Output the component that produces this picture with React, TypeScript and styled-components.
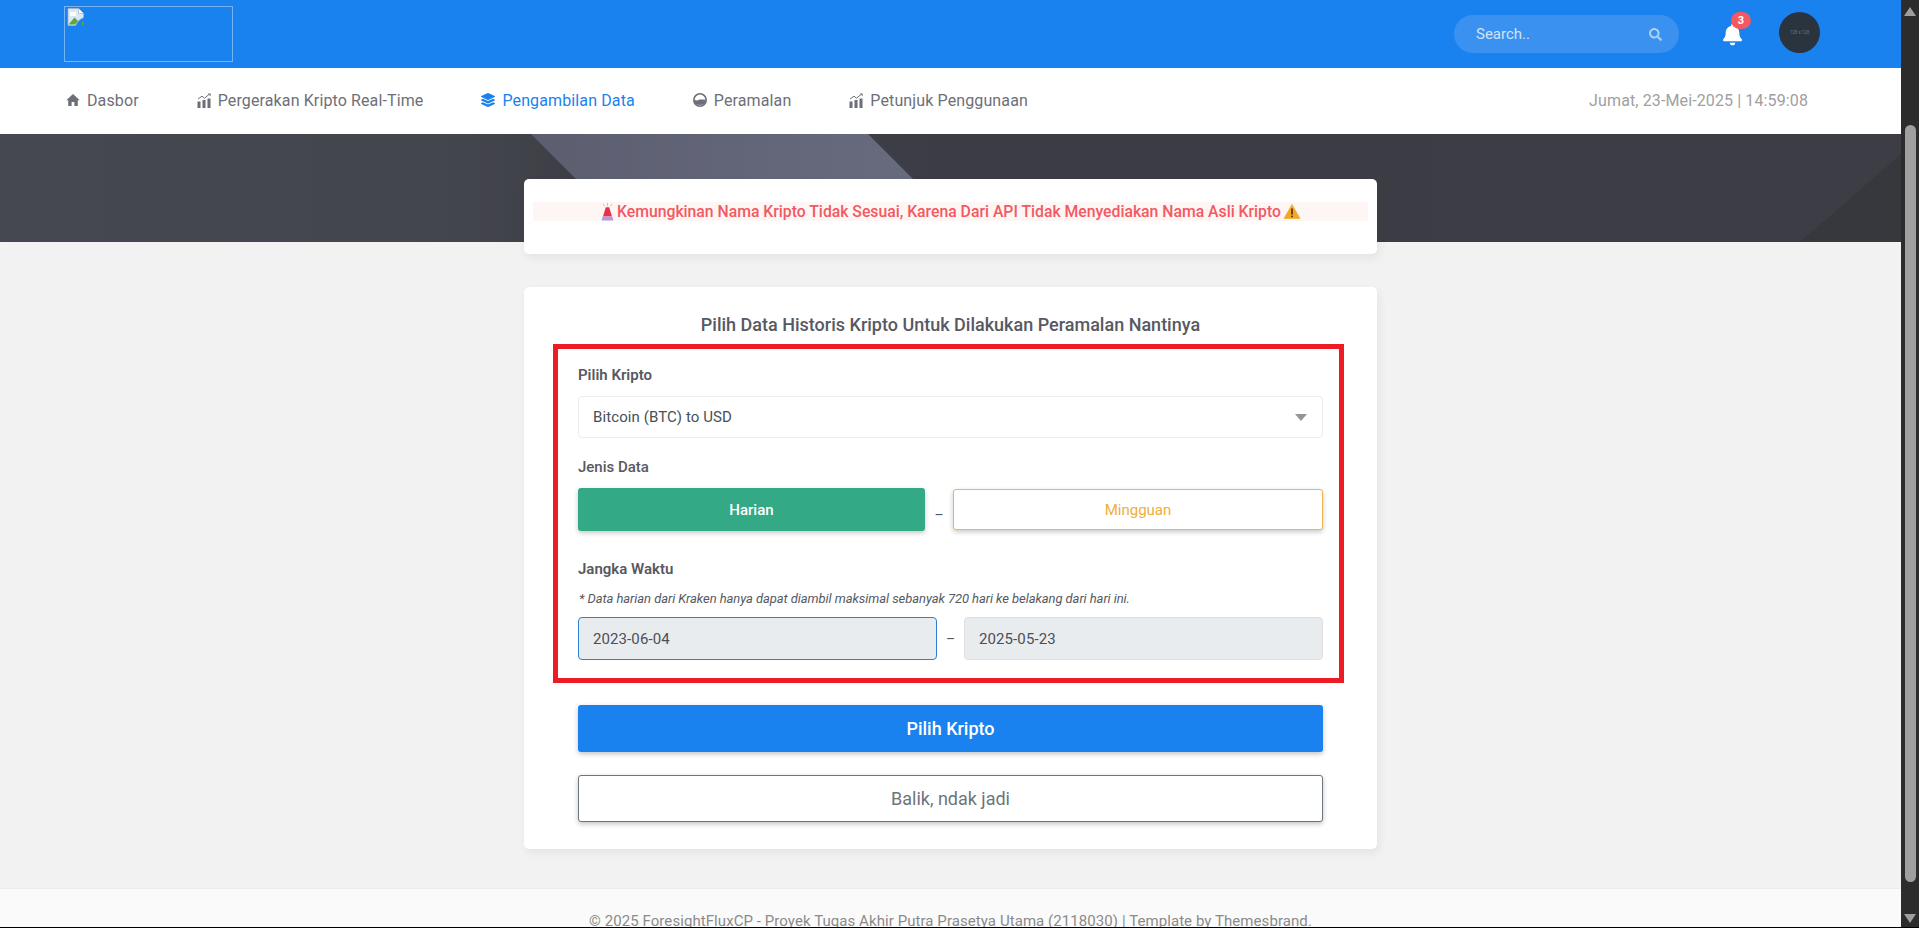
import React from "react";
import styled, { createGlobalStyle } from "styled-components";
import { FaBell, FaSearch, FaLayerGroup } from "react-icons/fa";

const Global = createGlobalStyle`
  html, body { margin: 0; padding: 0; height: 100%; overflow: hidden; background: #f2f2f2; }
  * { box-sizing: border-box; }
  body { font-family: Roboto, "Liberation Sans", sans-serif; color: #575962; }
`;

const Frame = styled.div`
  display: flex;
  width: 1919px;
  height: 928px;
  border-bottom: 1px solid #000;
  overflow: hidden;
`;
const Page = styled.div`
  flex: 1;
  min-width: 0;
  height: 927px;
  overflow: hidden;
  background: #f2f2f2;
`;
const TopBar = styled.header`
  height: 68px;
  background: #1a82ee;
  display: flex;
  align-items: center;
  padding: 0 81px 0 64px;
`;
const LogoBox = styled.div`
  width: 169px;
  height: 56px;
  border: 1px solid rgba(255, 255, 255, 0.4);
  padding: 1px 0 0 2px;
  line-height: 0;
`;
const Search = styled.div`
  margin-left: auto;
  width: 225px;
  height: 38px;
  border-radius: 19px;
  background: #3a91ef;
  display: flex;
  align-items: center;
  justify-content: space-between;
  padding: 0 17px 0 22px;
  color: #cfe4fb;
  font-size: 15px;
  svg { color: #a9d0f8; font-size: 13px; }
`;
const BellWrap = styled.div`
  position: relative;
  margin-left: 44px;
  width: 19px;
  height: 22px;
  color: #fff;
  margin-top: -1px;
  svg { display: block; width: 19px; height: 23px; }
`;
const Badge = styled.span`
  position: absolute;
  top: -11px;
  left: 8px;
  width: 20px;
  height: 17px;
  border-radius: 9px;
  background: #f25961;
  color: #fff;
  font-size: 11px;
  font-weight: 700;
  line-height: 17px;
  text-align: center;
`;
const Avatar = styled.div`
  margin-left: 37px;
  width: 41px;
  height: 41px;
  border-radius: 50%;
  background: #2a333e;
  color: #6f7680;
  font-size: 4.5px;
  display: flex;
  align-items: center;
  justify-content: center;
  margin-top: -3px;
`;
const NavBar = styled.nav`
  height: 66px;
  background: #fff;
  display: flex;
  align-items: center;
  padding: 0 93px 2px 66px;
  gap: 58px;
  font-size: 16px;
  letter-spacing: 0.12px;
`;
const NavItem = styled.div<{ $active?: boolean }>`
  display: flex;
  align-items: center;
  gap: 7px;
  color: ${(p) => (p.$active ? "#1a82ee" : "#6d6f78")};
  svg { flex: none; display: block; }
`;
const DateText = styled.div`
  margin-left: auto;
  color: #a0a0a0;
`;
const Hero = styled.section`
  position: relative;
  height: 108px;
  background: #42444c;
  overflow: hidden;
  svg { display: block; width: 100%; height: 100%; }
`;
const Content = styled.main`
  position: relative;
  z-index: 1;
  margin-top: -63px;
  display: flex;
  flex-direction: column;
  align-items: center;
  gap: 33px;
`;
const Card = styled.div`
  width: 853px;
  background: #fff;
  border-radius: 5px;
  box-shadow: 2px 4px 8px rgba(69, 65, 78, 0.08);
`;
const NoticeCard = styled(Card)`
  height: 75px;
  padding: 23px 9px 0;
`;
const Notice = styled.div`
  height: 19px;
  background: #fef5f5;
  color: #f25961;
  font-size: 15.75px;
  font-weight: 500;
  line-height: 19px;
  display: flex;
  align-items: center;
  justify-content: center;
  gap: 2px;
  svg { flex: none; }
`;
const FormCard = styled(Card)`
  padding: 26px 33px 27px 29px;
`;
const Title = styled.h2`
  margin: 0 0 7px;
  font-size: 18px;
  font-weight: 500;
  line-height: 24px;
  text-align: center;
  color: #575962;
  padding-left: 4px;
`;
const Marked = styled.div`
  border: 5px solid #ed1c24;
  padding: 16px 16px 18px 20px;
`;
const Label = styled.div<{ $gap: number; $weight?: number; $after?: number }>`
  margin-top: ${(p) => p.$gap}px;
  margin-bottom: ${(p) => p.$after ?? 11}px;
  font-size: 15px;
  line-height: 20px;
  font-weight: ${(p) => p.$weight ?? 600};
  color: #575962;
`;
const SelectBox = styled.div`
  height: 42px;
  border: 1px solid #ebedf2;
  border-radius: 4px;
  background: #fff;
  display: flex;
  align-items: center;
  justify-content: space-between;
  padding: 0 15px 0 14px;
  font-size: 15px;
  letter-spacing: 0.1px;
  color: #495057;
`;
const Caret = styled.span`
  width: 0;
  height: 0;
  border-left: 6px solid transparent;
  border-right: 6px solid transparent;
  border-top: 7px solid #959595;
`;
const ToggleRow = styled.div`
  display: grid;
  grid-template-columns: 347px 28px 370px;
  align-items: center;
`;
const Toggle = styled.div<{ $on?: boolean }>`
  height: ${(p) => (p.$on ? 43 : 41)}px;
  border-radius: 3px;
  display: flex;
  align-items: center;
  justify-content: center;
  font-size: 15px;
  font-weight: ${(p) => (p.$on ? 500 : 400)};
  background: ${(p) => (p.$on ? "#33aa85" : "#fff")};
  color: ${(p) => (p.$on ? "#fff" : "#f0ae3c")};
  border: ${(p) => (p.$on ? "none" : "1px solid #f0b54e")};
  box-shadow: 0 2px 5px rgba(0, 0, 0, 0.22);
`;
const Dash = styled.span<{ $drop?: number }>`
  text-align: center;
  font-size: 14px;
  color: #575962;
  position: relative;
  top: ${(p) => p.$drop ?? 0}px;
`;
const Note = styled.div`
  font-size: 13px;
  letter-spacing: -0.07px;
  line-height: 16px;
  font-style: italic;
  color: #575962;
  margin-bottom: 10px;
  padding-left: 1px;
`;
const DateRow = styled.div`
  display: grid;
  grid-template-columns: 359px 27px 359px;
  align-items: center;
`;
const DateInput = styled.div<{ $focus?: boolean }>`
  height: 43px;
  border-radius: 4px;
  background: #e9ecef;
  border: 1px solid ${(p) => (p.$focus ? "#2f7fd8" : "#dcdfe3")};
  display: flex;
  align-items: center;
  padding: 0 14px;
  font-size: 15px;
  letter-spacing: 0.1px;
  color: #495057;
`;
const BigButton = styled.div<{ $primary?: boolean }>`
  height: 47px;
  margin-top: ${(p) => (p.$primary ? 22 : 23)}px;
  margin-left: 25px;
  margin-right: 21px;
  border-radius: 3px;
  display: flex;
  align-items: center;
  justify-content: center;
  font-size: 18px;
  font-weight: ${(p) => (p.$primary ? 500 : 400)};
  background: ${(p) => (p.$primary ? "#1a82ee" : "#fff")};
  color: ${(p) => (p.$primary ? "#fff" : "#6c757d")};
  border: ${(p) => (p.$primary ? "none" : "1px solid #6c757d")};
  box-shadow: 0 2px 5px rgba(0, 0, 0, 0.24);
`;
const Footer = styled.footer`
  margin-top: 39px;
  height: 80px;
  background: #fafafa;
  border-top: 1px solid #ececec;
  padding-top: 22px;
  text-align: center;
  font-size: 15px;
  letter-spacing: 0.07px;
  line-height: 21px;
  color: #8b8b8b;
`;
const ScrollTrack = styled.div`
  width: 18px;
  flex: none;
  height: 927px;
  background: #2c2c2c;
  display: flex;
  flex-direction: column;
  align-items: center;
  padding: 7px 0 4px;
`;
const Arrow = styled.span<{ $down?: boolean }>`
  width: 0;
  height: 0;
  border-left: 6px solid transparent;
  border-right: 6px solid transparent;
  ${(p) => (p.$down ? "border-top: 9px solid #9e9e9e;" : "border-bottom: 9px solid #9e9e9e;")}
`;
const Thumb = styled.div`
  width: 11px;
  height: 757px;
  margin: 109px 0 auto;
  border-radius: 6px;
  background: #9f9f9f;
`;

const BrokenImage = () => (
  <svg width="18" height="18" viewBox="0 0 18 18">
    <path d="M1 0.5h10.5l5 5v4l-3.5 2-2.5 2.5-2 3.5H1z" fill="#d9e6f7" stroke="#a8b4c2" strokeWidth="0.7" />
    <path d="M11.5 0.5v5h5" fill="#fff" stroke="#a8b4c2" strokeWidth="0.7" />
    <path d="M3 4h6v4H3z" fill="#fff" />
    <path d="M1.5 16.5l6-7 3.5 3.5-3 3.5z" fill="#5fa83e" />
    <path d="M15 13l2 2.5-2 2.5z" fill="#5fa83e" />
  </svg>
);
const HomeIcon = () => (
  <svg width="14" height="14" viewBox="0 0 14 14">
    <path d="M7 1L0.3 7.2H2.2V13H5.6V9H8.4V13H11.8V7.2H13.7z" fill="currentColor" />
  </svg>
);
const ChartIcon = () => (
  <svg width="14" height="15" viewBox="0 0 14 15" fill="currentColor">
    <rect x="0.5" y="8.5" width="3" height="6.5" />
    <rect x="5.5" y="7" width="3" height="8" />
    <rect x="10.5" y="5.5" width="3" height="9.5" />
    <path d="M1 6L5 3.2l2.5 2L12 1.5" fill="none" stroke="currentColor" strokeWidth="1" />
    <path d="M10.8 0.4H13.6V3.2z" />
  </svg>
);
const RoundIcon = () => (
  <svg width="14" height="14" viewBox="0 0 14 14">
    <circle cx="7" cy="7" r="6.2" fill="none" stroke="currentColor" strokeWidth="1.6" />
    <path d="M1 6.8c2.5.6 3.5 1 4 .4.6-.7 4-.7 7.9-.4A6 6 0 0 1 1 6.8z" fill="currentColor" />
  </svg>
);
const Siren = () => (
  <svg width="15" height="18" viewBox="0 0 15 18">
    <path d="M7.5 0v3.2M3 0.8l1.6 2.6M12 0.8l-1.6 2.6" stroke="#f2c14e" strokeWidth="1" />
    <path d="M5.8 4.2h3.4L12 13.5H3z" fill="#e8304a" />
    <path d="M2.6 13.5h9.8l1 4H1.6z" fill="#b79ad6" />
  </svg>
);
const Warning = () => (
  <svg width="18" height="17" viewBox="0 0 18 17">
    <path d="M9 1.5L17 15.5H1z" fill="#f5a623" stroke="#f0b84a" strokeWidth="1" strokeLinejoin="round" />
    <path d="M9 5.5v6" stroke="#3a2a10" strokeWidth="1.5" />
    <circle cx="9" cy="13.4" r="0.9" fill="#3a2a10" />
  </svg>
);

export default function App() {
  return (
    <>
      <Global />
      <Frame>
        <Page>
          <TopBar>
            <LogoBox>
              <BrokenImage />
            </LogoBox>
            <Search>
              <span>Search..</span>
              <FaSearch />
            </Search>
            <BellWrap>
              <FaBell />
              <Badge>3</Badge>
            </BellWrap>
            <Avatar>128 x 128</Avatar>
          </TopBar>
          <NavBar>
            <NavItem><HomeIcon />Dasbor</NavItem>
            <NavItem><ChartIcon />Pergerakan Kripto Real-Time</NavItem>
            <NavItem $active><FaLayerGroup size={14} />Pengambilan Data</NavItem>
            <NavItem><RoundIcon />Peramalan</NavItem>
            <NavItem><ChartIcon />Petunjuk Penggunaan</NavItem>
            <DateText>Jumat, 23-Mei-2025 | 14:59:08</DateText>
          </NavBar>
          <Hero>
            <svg viewBox="0 0 1901 108" preserveAspectRatio="none">
              <defs>
                <linearGradient id="base" x1="0" x2="1" y1="0" y2="0">
                  <stop offset="0" stopColor="#464851" />
                  <stop offset="0.22" stopColor="#44464e" />
                  <stop offset="0.5" stopColor="#3c3d44" />
                  <stop offset="1" stopColor="#3d3e45" />
                </linearGradient>
                <linearGradient id="plane" x1="0" x2="1" y1="0" y2="0">
                  <stop offset="0" stopColor="#5c5e70" />
                  <stop offset="1" stopColor="#6a6c80" />
                </linearGradient>
                <linearGradient id="shade" x1="0" x2="1" y1="0" y2="0">
                  <stop offset="0" stopColor="#44464e" stopOpacity="0" />
                  <stop offset="1" stopColor="#36373c" />
                </linearGradient>
              </defs>
              <rect width="1901" height="108" fill="url(#base)" />
              <polygon points="430,0 531,0 639,108 430,108" fill="url(#shade)" />
              <polygon points="531,0 868,0 976,108 639,108" fill="url(#plane)" />
              <polygon points="1800,108 1901,20 1901,108" fill="#37383e" />
            </svg>
          </Hero>
          <Content>
            <NoticeCard>
              <Notice>
                <Siren />
                Kemungkinan Nama Kripto Tidak Sesuai, Karena Dari API Tidak Menyediakan Nama Asli Kripto
                <Warning />
              </Notice>
            </NoticeCard>
            <FormCard>
              <Title>Pilih Data Historis Kripto Untuk Dilakukan Peramalan Nantinya</Title>
              <Marked>
                <Label $gap={0}>Pilih Kripto</Label>
                <SelectBox>
                  Bitcoin (BTC) to USD
                  <Caret />
                </SelectBox>
                <Label $gap={19} $weight={500}>Jenis Data</Label>
                <ToggleRow>
                  <Toggle $on>Harian</Toggle>
                  <Dash $drop={5}>–</Dash>
                  <Toggle>Mingguan</Toggle>
                </ToggleRow>
                <Label $gap={28} $after={12}>Jangka Waktu</Label>
                <Note>* Data harian dari Kraken hanya dapat diambil maksimal sebanyak 720 hari ke belakang dari hari ini.</Note>
                <DateRow>
                  <DateInput $focus>2023-06-04</DateInput>
                  <Dash>–</Dash>
                  <DateInput>2025-05-23</DateInput>
                </DateRow>
              </Marked>
              <BigButton $primary>Pilih Kripto</BigButton>
              <BigButton>Balik, ndak jadi</BigButton>
            </FormCard>
          </Content>
          <Footer>© 2025 ForesightFluxCP - Proyek Tugas Akhir Putra Prasetya Utama (2118030) | Template by Themesbrand.</Footer>
        </Page>
        <ScrollTrack>
          <Arrow />
          <Thumb />
          <Arrow $down />
        </ScrollTrack>
      </Frame>
    </>
  );
}
